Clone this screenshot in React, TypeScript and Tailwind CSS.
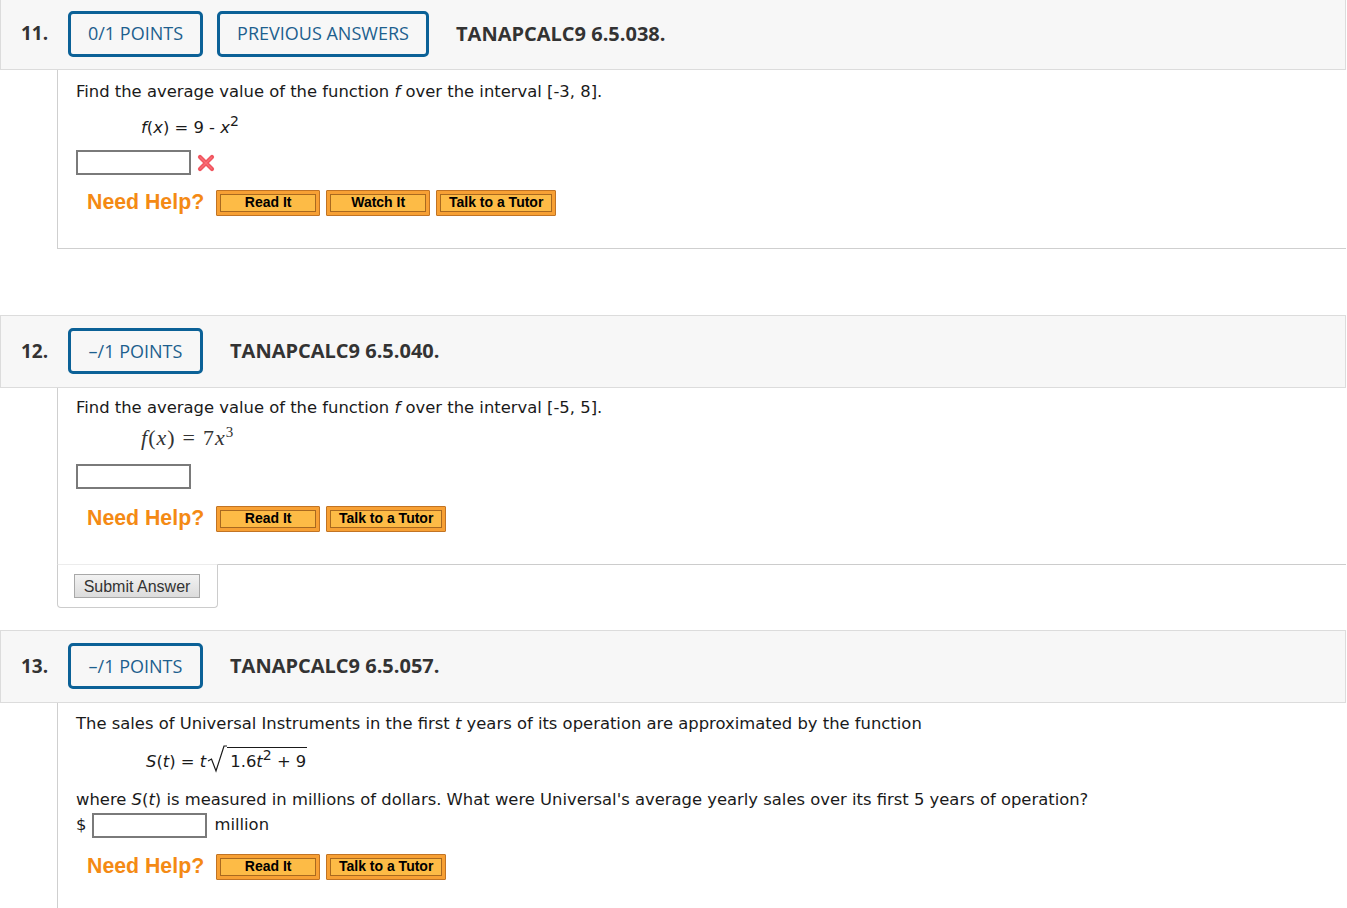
import React from "react";

// Header font, body font and the help-button font
const hdr = { fontFamily: '"Open Sans", "Liberation Sans", sans-serif' };
const arial = { fontFamily: '"Liberation Sans", Arial, sans-serif' };

function PointsBox({ children, wide }: { children: React.ReactNode; wide?: boolean }) {
  return (
    <div
      className={
        "flex h-[46px] items-center justify-center rounded-[5px] border-[3px] border-[#0b6197] text-[18px] text-[#1d5f8e] " +
        (wide ? "w-[212px]" : "w-[135px]")
      }
    >
      {children}
    </div>
  );
}

function Header({ num, points, prev, title }: { num: string; points: string; prev?: boolean; title: string }) {
  return (
    <div
      className="flex h-[73px] items-center border border-[#dcdcdc] bg-[#f7f7f7] pl-[20px]"
      style={hdr}
    >
      <div className="w-[47px] text-[19px] font-bold text-[#333]">{num}</div>
      <PointsBox>{points}</PointsBox>
      {prev && (
        <div className="ml-[14px]">
          <PointsBox wide>PREVIOUS ANSWERS</PointsBox>
        </div>
      )}
      <div className="ml-[27px] text-[20px] font-bold text-[#333]">{title}</div>
    </div>
  );
}

function HelpButton({ label, w }: { label: string; w: string }) {
  return (
    <div className={"h-[26px] rounded-[1px] border border-[#c27424] bg-[#f7a034] p-[3px] " + w}>
      <div
        className="flex h-full items-center justify-center border border-[#a9691f] bg-[#fdbb46] text-[14px] font-bold text-black"
        style={arial}
      >
        {label}
      </div>
    </div>
  );
}

function NeedHelp({ tutorOnly }: { tutorOnly?: boolean }) {
  return (
    <div className="flex items-center pl-[11px]">
      <span className="mr-[12px] text-[21.3px] font-bold text-[#f48a14]" style={arial}>
        Need Help?
      </span>
      <div className="flex gap-[6px]">
        <HelpButton label="Read It" w="w-[104px]" />
        {!tutorOnly && <HelpButton label="Watch It" w="w-[104px]" />}
        <HelpButton label="Talk to a Tutor" w="w-[120px]" />
      </div>
    </div>
  );
}

function AnswerBox() {
  return <div className="h-[25px] w-[115px] border-2 border-[#7a7a7a] bg-white" />;
}

function RedX() {
  return (
    <svg width="20" height="20" viewBox="0 0 20 20" className="ml-[5px]">
      <path d="M4 4 L16 16 M16 4 L4 16" stroke="#f0555f" strokeWidth="4.2" strokeLinecap="round" />
      <path d="M4.5 4.5 L15.5 15.5 M15.5 4.5 L4.5 15.5" stroke="#ff8088" strokeWidth="1.2" strokeLinecap="round" opacity="0.6" />
    </svg>
  );
}

export default function App() {
  const body = { fontFamily: '"DejaVu Sans", Verdana, sans-serif' };
  const tex = { fontFamily: '"Liberation Serif", "Times New Roman", serif' };

  return (
    <div className="w-[1346px] overflow-hidden bg-white text-[#1a1a1a]">
      <div className="-mt-[3px]">
        {/* Question 11 */}
        <Header num="11." points="0/1 POINTS" prev title="TANAPCALC9 6.5.038." />
        <div className="ml-[57px] border-b border-l border-[#cfcfcf] pb-[29px] pl-[18px] pt-[12px]" style={body}>
          <p className="text-[16.4px] leading-[20px]">
            Find the average value of the function <i>f</i> over the interval [-3, 8].
          </p>
          <p className="mt-[16px] pl-[65px] text-[16.4px] leading-[20px]">
            <i>f</i>(<i>x</i>) = 9 - <i>x</i>
            <sup className="text-[14px]">2</sup>
          </p>
          <div className="mt-[12px] flex items-center">
            <AnswerBox />
            <RedX />
          </div>
          <div className="mt-[12px]">
            <NeedHelp />
          </div>
        </div>

        <div className="h-[66px]" />

        {/* Question 12 */}
        <Header num="12." points="–/1 POINTS" title="TANAPCALC9 6.5.040." />
        <div className="ml-[57px] border-l border-[#cfcfcf] pb-[29px] pl-[18px] pt-[10px]" style={body}>
          <p className="text-[16.4px] leading-[20px]">
            Find the average value of the function <i>f</i> over the interval [-5, 5].
          </p>
          <p className="mt-[9px] pl-[65px] text-[22px] leading-[22px] tracking-[1px] text-[#333]" style={tex}>
            <i>f</i>(<i>x</i>)<span className="mx-[7px]">=</span>7<i>x</i>
            <sup className="text-[15px]">3</sup>
          </p>
          <div className="mt-[15px]">
            <AnswerBox />
          </div>
          <div className="mt-[14px]">
            <NeedHelp tutorOnly />
          </div>
        </div>
        <div className="ml-[57px] flex">
          <div className="w-[161px] rounded-b-[4px] border border-t-[#ececec] border-[#cccccc] pb-[9px] pl-[16px] pt-[9px]">
            <button
              className="h-[24px] w-[126px] border border-[#a8a8a8] bg-gradient-to-b from-[#f2f2f2] to-[#dcdcdc] text-[16px] text-[#333]"
              style={arial}
            >
              Submit Answer
            </button>
          </div>
          <div className="flex-1 border-t border-[#cccccc]" />
        </div>

        <div className="h-[22px]" />

        {/* Question 13 */}
        <Header num="13." points="–/1 POINTS" title="TANAPCALC9 6.5.057." />
        <div className="ml-[57px] h-[210px] border-l border-[#cfcfcf] pl-[18px] pt-[11px]" style={body}>
          <p className="text-[16.4px] leading-[20px]">
            The sales of Universal Instruments in the first <i>t</i> years of its operation are approximated by the function
          </p>
          <div className="mt-[11px] flex items-end pl-[70px] text-[16.4px] leading-[20px]">
            <span className="pb-[1px]">
              <i>S</i>(<i>t</i>) = <i>t</i>
            </span>
            <svg width="20" height="28" viewBox="0 0 20 28" className="ml-[1px]">
              <path d="M1 16 L4.5 14 L9 26 L17 1 L20 1" stroke="#1a1a1a" strokeWidth="1.2" fill="none" />
            </svg>
            <span className="mb-[1px] border-t-[1.2px] border-[#1a1a1a] pl-[3px] pr-[1px] pt-[4px]">
              1.6<i>t</i>
              <sup className="text-[14px]">2</sup> + 9
            </span>
          </div>
          <p className="mt-[17px] text-[16.4px] leading-[20px]">
            where <i>S</i>(<i>t</i>) is measured in millions of dollars. What were Universal's average yearly sales over its first 5
            years of operation?
          </p>
          <div className="mt-[3px] flex items-center text-[16.4px]">
            <span className="mr-[6px]">$</span>
            <AnswerBox />
            <span className="ml-[7px]">million</span>
          </div>
          <div className="mt-[13px]">
            <NeedHelp tutorOnly />
          </div>
        </div>
      </div>
    </div>
  );
}
